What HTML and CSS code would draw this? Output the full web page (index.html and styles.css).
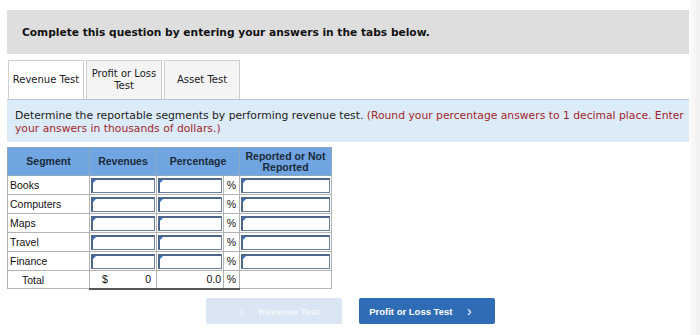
FILE: index.html
```html
<!DOCTYPE html>
<html lang="en">
<head>
  <meta charset="UTF-8" />
  <title>Revenue Test</title>
  <link rel="stylesheet" href="styles.css">
</head>
<body>
<div class="frame">
  <div class="page">
    <div class="prompt">Complete this question by entering your answers in the tabs below.</div>

    <div class="tabs">
      <div class="tab active">Revenue Test</div>
      <div class="tab">Profit or Loss<br>Test</div>
      <div class="tab">Asset Test</div>
    </div>

    <div class="info">
      <p>Determine the reportable segments by performing revenue test. <span class="note">(Round your percentage answers to 1 decimal place. Enter your answers in thousands of dollars.)</span></p>
    </div>

    <table class="grid">
      <tr class="head">
        <th class="c-seg">Segment</th>
        <th class="c-rev">Revenues</th>
        <th colspan="2">Percentage</th>
        <th class="c-rep">Reported or Not<br>Reported</th>
      </tr>
      <tr>
        <td class="label">Books</td>
        <td class="inp"><div class="box"></div></td>
        <td class="inp"><div class="box"></div></td>
        <td class="pct">%</td>
        <td class="inp"><div class="box"></div></td>
      </tr>
      <tr>
        <td class="label">Computers</td>
        <td class="inp"><div class="box"></div></td>
        <td class="inp"><div class="box"></div></td>
        <td class="pct">%</td>
        <td class="inp"><div class="box"></div></td>
      </tr>
      <tr>
        <td class="label">Maps</td>
        <td class="inp"><div class="box"></div></td>
        <td class="inp"><div class="box"></div></td>
        <td class="pct">%</td>
        <td class="inp"><div class="box"></div></td>
      </tr>
      <tr>
        <td class="label">Travel</td>
        <td class="inp"><div class="box"></div></td>
        <td class="inp"><div class="box"></div></td>
        <td class="pct">%</td>
        <td class="inp"><div class="box"></div></td>
      </tr>
      <tr>
        <td class="label">Finance</td>
        <td class="inp"><div class="box"></div></td>
        <td class="inp"><div class="box"></div></td>
        <td class="pct">%</td>
        <td class="inp"><div class="box"></div></td>
      </tr>
      <tr class="total">
        <td class="label total-label">Total</td>
        <td class="sum dollars"><span>$</span><span class="amt">0</span></td>
        <td class="sum right">0.0</td>
        <td class="pct sum">%</td>
        <td></td>
      </tr>
    </table>

    <div class="nav">
      <button class="btn prev" disabled><span class="chev">&lsaquo;</span> Revenue Test</button>
      <button class="btn next">Profit or Loss Test <span class="chev">&rsaquo;</span></button>
    </div>
  </div>
  <div class="edge"></div>
</div>
</body>
</html>
```

FILE: styles.css
```css
* { box-sizing: border-box; }
body {
  margin: 0;
  background: #fff;
  font-family: "DejaVu Sans", Verdana, sans-serif;
  color: #222;
}
.frame {
  display: flex;
  height: 335px;
}
.page {
  width: 690px;
  padding: 10px 1px 0 7px;
}
.edge {
  width: 10px;
  background: linear-gradient(to right, #fafafa, #f1f1f1);
}
.prompt {
  height: 44px;
  background: #dedede;
  display: flex;
  align-items: center;
  padding-left: 15px;
  font-size: 10.65px;
  font-weight: bold;
  color: #111;
}
.tabs {
  display: flex;
  gap: 2px;
  margin-top: 6px;
  padding-left: 1px;
}
.tab {
  width: 76px;
  height: 39px;
  border: 1px solid #cfcfcf;
  border-bottom: none;
  background: #f4f4f4;
  display: flex;
  align-items: center;
  justify-content: center;
  text-align: center;
  font-size: 10px;
  line-height: 12px;
  color: #222;
}
.tab.active {
  background: #fff;
}
.info {
  background: #dcebf8;
  border-top: 1px solid #b8c4cf;
  padding: 9px 4px 6px 8px;
  height: 43px;
}
.info p {
  margin: 0;
  font-size: 10.78px;
  line-height: 13px;
  color: #222;
}
.note {
  color: #a3262a;
}
.grid {
  margin-top: 5px;
  border-collapse: collapse;
  font-family: "Liberation Sans", Arial, sans-serif;
  font-size: 10.5px;
  color: #111;
}
.grid th {
  background: #70a5e2;
  border: 1px solid #8ea6bf;
  height: 28px;
  font-size: 10.5px;
  line-height: 11px;
  font-weight: bold;
  color: #1b2a3a;
  padding: 0;
}
.c-seg { width: 82px; }
.c-rev { width: 67px; }
.c-rep { width: 92px; }
.grid td {
  border: 1px solid #b3b3b3;
  height: 19px;
  padding: 0;
}
.grid td.label {
  padding-left: 2px;
}
.grid td.total-label {
  padding-left: 14px;
}
.grid td.inp {
  padding: 1px 1px 0 1px;
  width: 67px;
}
.box {
  position: relative;
  height: 15px;
  border: 1px solid #6a7f9a;
  border-left: 2px solid #4d6689;
  border-top: 2px solid #4d6689;
  background: #fff;
}
.box::before {
  content: "";
  position: absolute;
  left: 0;
  top: 0;
  border-top: 3px solid #2f72c8;
  border-right: 3px solid transparent;
}
.grid td.pct {
  width: 16px;
  text-align: center;
  padding: 0;
}
.grid tr.total td {
  height: 18px;
}
.grid td.sum {
  border-bottom: 2px solid #555;
}
.grid td.dollars {
  padding: 0 5px 0 12px;
}
.amt {
  float: right;
}
.grid td.right {
  text-align: right;
  padding-right: 2px;
}
.nav {
  display: flex;
  justify-content: center;
  gap: 17px;
  margin-top: 8px;
  padding-left: 4px;
}
.btn {
  width: 136px;
  height: 26px;
  border: none;
  border-radius: 2px;
  font-family: "Liberation Sans", Arial, sans-serif;
  font-size: 9.5px;
  font-weight: bold;
  color: #fff;
  cursor: pointer;
}
.btn.prev {
  background: #dae6f3;
  color: #f3f7fb;
}
.btn.next {
  background: #2f6cb6;
}
.chev {
  font-size: 14px;
  font-weight: normal;
  margin: 0 12px;
  vertical-align: -1px;
}
```
